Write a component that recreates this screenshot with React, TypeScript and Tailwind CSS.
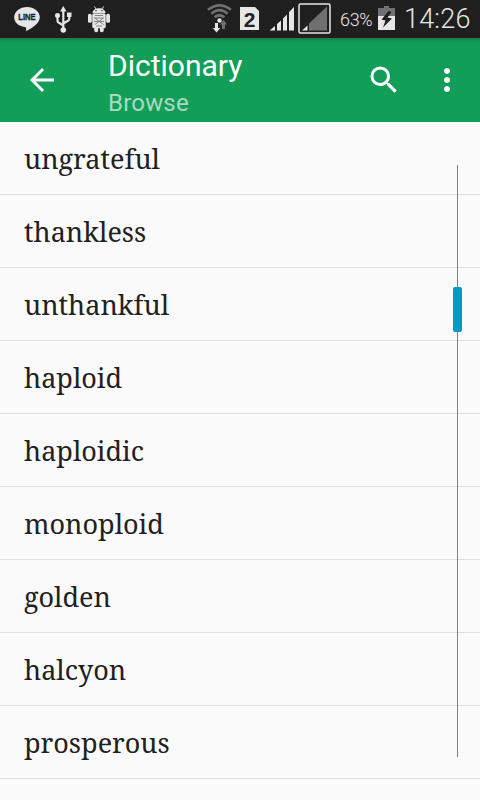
import { MdArrowBack, MdMoreVert, MdSearch } from 'react-icons/md';

const WORDS = [
  'ungrateful',
  'thankless',
  'unthankful',
  'haploid',
  'haploidic',
  'monoploid',
  'golden',
  'halcyon',
  'prosperous',
];

export default function App() {
  return (
    <div className="flex h-[800px] w-[480px] flex-col overflow-hidden bg-[#fafafa] font-['Roboto',sans-serif]">
      <StatusBar />
      <AppBar />
      <main className="relative flex-1">
        <ul>
          {WORDS.map((word) => (
            <li
              key={word}
              className="flex h-[73px] items-center border-b border-[#dedede] px-6 pt-px font-['Noto_Serif','DejaVu_Serif_Condensed','DejaVu_Serif',serif] text-[27px] leading-9 text-[#212121]"
            >
              {word}
            </li>
          ))}
        </ul>
        <FastScroller />
      </main>
    </div>
  );
}

function StatusBar() {
  return (
    <div className="flex h-[38px] flex-shrink-0 items-center bg-[#1f1f1f] text-[#e6e6e6]">
      <LineIcon />
      <UsbIcon />
      <RobotIcon />
      <div className="flex-1" />
      <WifiIcon />
      <SimIcon />
      <SignalIcon />
      <SecondSignalIcon />
      <span className="ml-[9px] w-[38px] pt-0.5 text-[18px] leading-[38px] font-[350] tracking-[-0.3px] whitespace-nowrap">
        63%
      </span>
      <BatteryIcon />
      <span className="ml-[9px] w-[76px] text-[27px] leading-[38px] font-[350] tracking-[0.2px] whitespace-nowrap">
        14:26
      </span>
    </div>
  );
}

function AppBar() {
  return (
    <header className="flex h-[84px] flex-shrink-0 items-center bg-[#129e58] bg-linear-to-b from-[#128148] via-[#129b56] via-5% to-[#129e58] to-12% text-white">
      <MdArrowBack className="ml-6 size-9" />
      <div className="ml-12 flex-1 pt-2">
        <h1 className="text-[30px] leading-[38px]">Dictionary</h1>
        <p className="text-2xl leading-9 tracking-[0.2px] text-[#a9d9c0]">Browse</p>
      </div>
      <MdSearch className="size-9" />
      <MdMoreVert className="mr-[15px] ml-[27px] size-9" />
    </header>
  );
}

function FastScroller() {
  return (
    <div className="absolute top-[43px] right-[18px] flex h-[592px] w-[9px] justify-center">
      <div className="h-full w-px bg-[#808080]" />
      <div className="absolute top-[122px] h-[45px] w-[9px] rounded-[2px] bg-[#0099cc]" />
    </div>
  );
}

function LineIcon() {
  return (
    <svg className="ml-[14px] h-[38px] w-[26px]" viewBox="14 0 26 38">
      <path
        fill="currentColor"
        d="M27 7C20 7 14.200 11.400 14.200 17.300C14.200 22.500 18.500 26.200 24.600 27C26.500 27.300 26.400 28.200 26 31.200C31.500 28.500 39.800 23.500 39.800 17.300C39.800 11.400 34 7 27 7Z"
      />
      <text
        x="27"
        y="20.300"
        textAnchor="middle"
        textLength="17.500"
        lengthAdjust="spacingAndGlyphs"
        className="fill-[#1f1f1f] stroke-[#1f1f1f] stroke-[0.3] font-['Liberation_Sans',sans-serif] text-[8.5px] font-bold"
      >
        LINE
      </text>
    </svg>
  );
}

function UsbIcon() {
  return (
    <svg className="ml-[15px] h-[38px] w-[17px]" viewBox="55 0 17 38">
      <g fill="none" stroke="currentColor" strokeWidth="2.200">
        <path d="M63.300 9V30M57.500 16V20.500Q57.500 22.500 59.500 23L63.300 25.500M69.300 15V18.500Q69.300 20.300 67.500 21L63.300 23.500" />
      </g>
      <g fill="currentColor">
        <path d="M63.300 6L66.500 11.500H60.100Z" />
        <path d="M67 12.500H71.500V17H67Z" />
        <circle cx="57.500" cy="15.500" r="2.500" />
        <circle cx="63.300" cy="30" r="2.800" />
      </g>
    </svg>
  );
}

function RobotIcon() {
  return (
    <svg className="ml-4 h-[38px] w-[22px]" viewBox="88 0 22 38">
      <g fill="currentColor">
        <path d="M92.500 13.200C92.500 6.500 105.500 6.500 105.500 13.200Z" />
        <rect x="92.300" y="13.600" width="13.400" height="14.600" rx="1.500" />
        <rect x="88" y="13.800" width="3.800" height="9" rx="1.600" />
        <rect x="106.200" y="13.800" width="3.800" height="9" rx="1.600" />
        <rect x="94.300" y="26" width="3.800" height="6.200" rx="1.600" />
        <rect x="99.900" y="26" width="3.800" height="6.200" rx="1.600" />
      </g>
      <path d="M94.500 6.500L96 9M103.500 6.500L102 9" stroke="currentColor" strokeWidth="1" />
      <g fill="#1f1f1f">
        <circle cx="96" cy="10.700" r="0.700" />
        <circle cx="102" cy="10.700" r="0.700" />
      </g>
      <g fill="none" stroke="#777" strokeWidth="0.900">
        <path d="M95 15.500H103M94.500 18H103.500L95 24.500M94.500 18L103.500 24.500M94 21.500H104M96 26H102" />
      </g>
    </svg>
  );
}

function WifiIcon() {
  return (
    <svg className="h-[38px] w-[25px]" viewBox="207 0 25 38">
      <g fill="none" stroke="#707070" strokeWidth="2.700">
        <path d="M208 9.800Q219.500 0.800 231 9.800" />
        <path d="M211.300 13.700Q219.500 6.700 227.700 13.700" />
        <path d="M214.700 17.300Q219.500 13.200 224.300 17.300" />
      </g>
      <circle cx="219.500" cy="20.500" r="2.200" fill="currentColor" />
      <path
        fill="currentColor"
        d="M215 23H218V28H220.300L216.500 32.500L212.700 28H215Z"
      />
      <path fill="#707070" d="M222 29V24.500H219.800L223.500 20L227.200 24.500H225V29Z" />
    </svg>
  );
}

function SimIcon() {
  return (
    <svg className="ml-2 h-[38px] w-[19px]" viewBox="240 0 19 38">
      <path fill="currentColor" d="M240 7H255L259 11V30H240Z" />
      <text
        x="249.700"
        y="26.500"
        textAnchor="middle"
        className="fill-[#1f1f1f] font-['Liberation_Sans',sans-serif] text-[21px] font-bold"
      >
        2
      </text>
    </svg>
  );
}

function SignalIcon() {
  return (
    <svg className="ml-[10px] h-[38px] w-[25px]" viewBox="269 0 25 38">
      <path
        fill="currentColor"
        d="M269.500 30.500L275 26V30.500ZM277 24L281 20.500V30.500H277ZM283 18.500L287 14.500V30.500H283ZM289 12L294 7V30.500H289Z"
      />
    </svg>
  );
}

function SecondSignalIcon() {
  return (
    <svg className="ml-1 h-[38px] w-[33px]" viewBox="298 0 33 38">
      <rect
        x="299"
        y="4"
        width="31"
        height="29"
        rx="1.500"
        fill="none"
        stroke="currentColor"
        strokeWidth="1.500"
      />
      <path fill="#707070" d="M309 23.500L327 6.500V30.500H309Z" />
      <path fill="currentColor" d="M302 30.500L307.500 25.500V30.500Z" />
    </svg>
  );
}

function BatteryIcon() {
  return (
    <svg className="h-[38px] w-[17px]" viewBox="378 0 17 38">
      <path fill="#707070" d="M378 8H384V6H389V8H395V16H378Z" />
      <rect x="378" y="16" width="17" height="14" fill="currentColor" />
      <path fill="#1f1f1f" d="M388.500 11L381.500 19.500L385.500 20.500L383 27.500L392 18.500L387.500 17.500L391.500 12Z" />
    </svg>
  );
}
